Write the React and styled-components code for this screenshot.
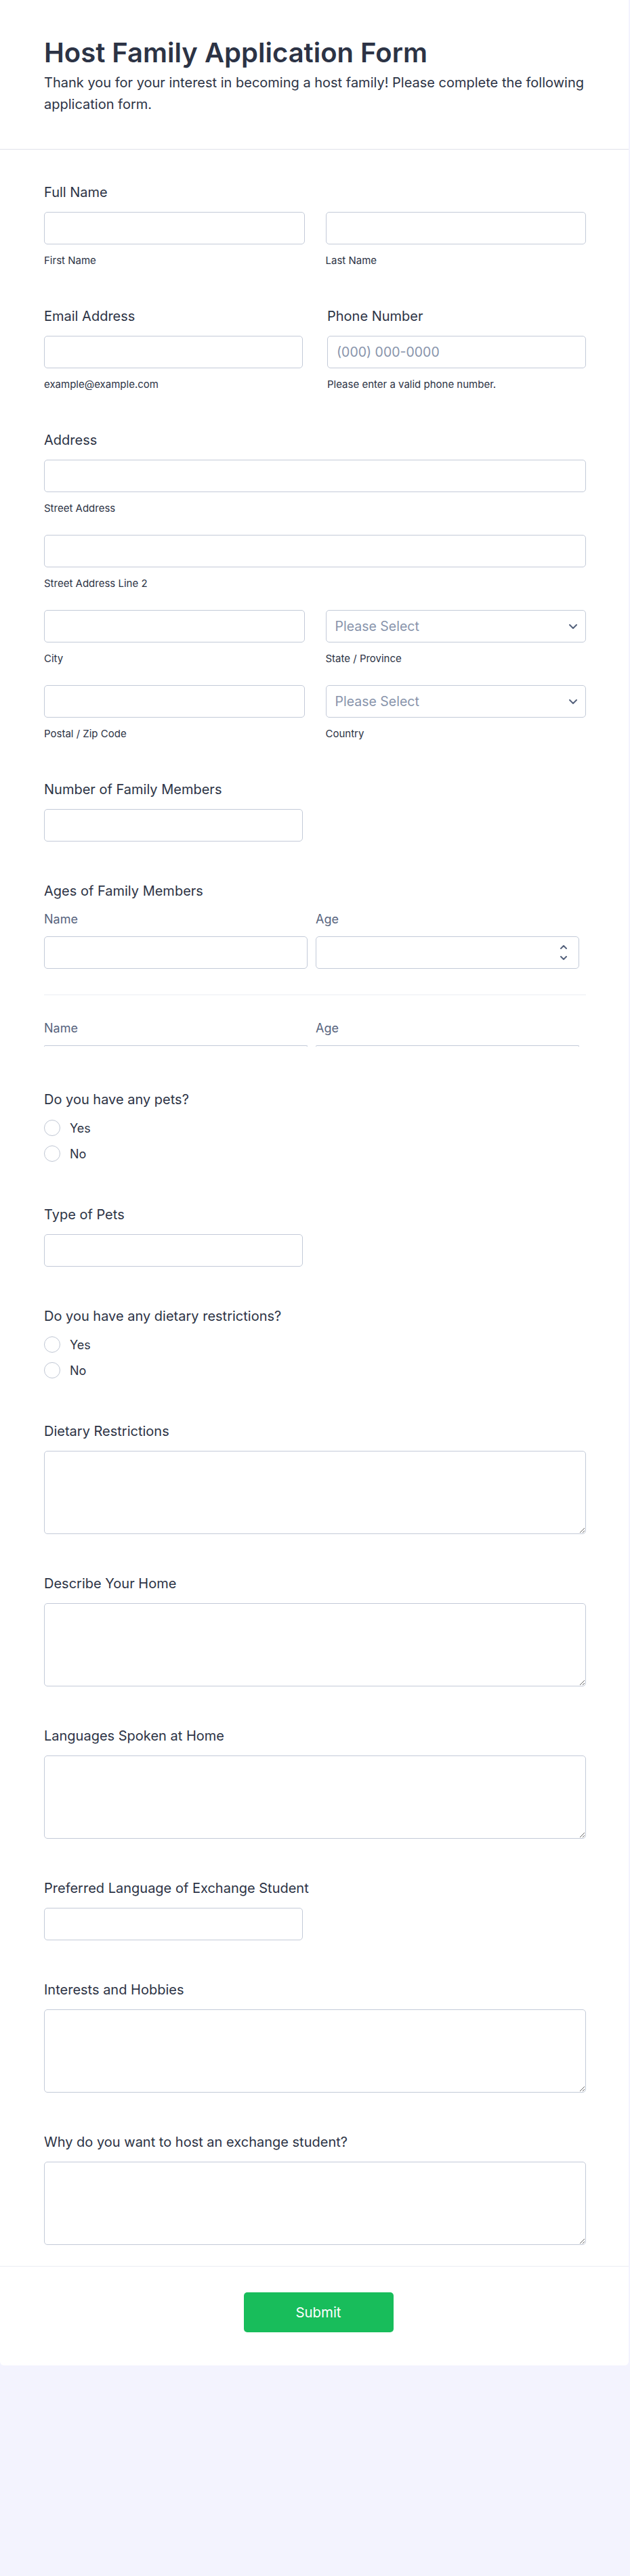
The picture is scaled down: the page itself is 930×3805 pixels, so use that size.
import React from 'react';
import styled, { createGlobalStyle } from 'styled-components';

const GlobalStyle = createGlobalStyle`
  html, body { margin: 0; padding: 0; background: #f3f3fe; }
  body {
    font-family: Inter, "Noto Sans", "Liberation Sans", sans-serif;
    color: #2c3345;
    -webkit-font-smoothing: antialiased;
  }
  *, *::before, *::after { box-sizing: border-box; }
`;

const Page = styled.div`
  min-height: 3805px;
  background: #f3f3fe;
`;

const Card = styled.main`
  width: 928px;
  background: #ffffff;
  border-radius: 0 0 6px 6px;
`;

const Header = styled.header`
  padding: 54px 63px 50px 65px;
  border-bottom: 1px solid #dfe1ea;
`;

const Title = styled.h1`
  margin: 0;
  font-size: 40px;
  line-height: 48px;
  font-weight: 600;
  color: #2c3345;
`;

const Description = styled.p`
  margin: 4px 0 0;
  font-size: 20px;
  line-height: 32px;
  color: #2c3345;
`;

const Body = styled.div`
  padding: 21px 63px 0 65px;
`;

const Field = styled.section`
  padding: 30px 0 31px;
`;

const Label = styled.label`
  display: block;
  font-size: 20px;
  line-height: 24px;
  font-weight: 400;
  color: #2c3345;
  margin-bottom: 17px;
`;

const Grid = styled.div`
  display: grid;
  grid-template-columns: 1fr 1fr;
  column-gap: ${(p) => p.$gap || 31}px;
  row-gap: 30px;
`;

const Cell = styled.div`
  display: flex;
  flex-direction: column;
  min-width: 0;
  grid-column: ${(p) => (p.$wide ? '1 / 3' : 'auto')};
`;

const boxStyles = `
  height: 48px;
  border: 1px solid #c3cad8;
  border-radius: 5px;
  background: #fff;
  font-family: Inter, "Noto Sans", sans-serif;
  font-size: 19.5px;
  color: #2c3345;
`;

const Input = styled.input`
  ${boxStyles}
  display: block;
  width: ${(p) => (p.$w ? `${p.$w}px` : '100%')};
  padding: 0 13px;
  outline: none;
  &::placeholder { color: #8894ab; }
`;

const SubLabel = styled.span`
  display: block;
  margin-top: 15px;
  font-size: 15px;
  line-height: 18px;
  color: #2c3345;
`;

const SelectBox = styled.div`
  ${boxStyles}
  display: flex;
  align-items: center;
  padding: 0 12px 0 13px;
`;

const Select = styled.select`
  flex: 1;
  min-width: 0;
  appearance: none;
  -webkit-appearance: none;
  border: none;
  outline: none;
  background: transparent;
  font-family: inherit;
  font-size: 19.5px;
  color: #8894ab;
  padding: 0;
`;

const NumberBox = styled.div`
  ${boxStyles}
  display: flex;
  align-items: center;
  padding: 0 17px 0 13px;
`;

const BareInput = styled.input`
  flex: 1;
  min-width: 0;
  border: none;
  outline: none;
  background: transparent;
  font-family: inherit;
  font-size: 19.5px;
  color: #2c3345;
  padding: 0;
  -moz-appearance: textfield;
  &::-webkit-inner-spin-button,
  &::-webkit-outer-spin-button { -webkit-appearance: none; margin: 0; }
`;

const Spinner = styled.div`
  display: flex;
  flex-direction: column;
  align-items: center;
  gap: 10px;
`;

const TableHead = styled.div`
  display: grid;
  grid-template-columns: 389px 389px;
  column-gap: 12px;
  font-size: 18px;
  line-height: 22px;
  color: #57647e;
  margin-bottom: 14px;
`;

const Table = styled.div`
  padding-top: 2px;
  padding-bottom: 5px;
`;

const TableRow = styled.div`
  display: grid;
  grid-template-columns: 389px 389px;
  column-gap: 12px;
`;

const RowSeparator = styled.hr`
  margin: 38px 0 38px;
  border: none;
  border-top: 1px solid #eceef3;
  height: 0;
`;

const ClippedInput = styled.div`
  height: 2px;
  border: 1px solid #c3cad8;
  border-bottom: none;
  border-radius: 5px 5px 0 0;
`;

const RadioList = styled.div`
  display: flex;
  flex-direction: column;
  gap: 10px;
  margin-top: -1px;
  padding-bottom: 3px;
`;

const RadioRow = styled.label`
  display: flex;
  align-items: center;
  gap: 14px;
  height: 28px;
  font-size: 18px;
  color: #2c3345;
`;

const RadioCircle = styled.span`
  width: 24px;
  height: 24px;
  border-radius: 50%;
  border: 1px solid #bfc6d3;
  background: #fff;
  flex: none;
`;

const TextArea = styled.textarea`
  display: block;
  width: 100%;
  height: 123px;
  border: 1px solid #c3cad8;
  border-radius: 5px;
  background: #fff;
  font-family: inherit;
  font-size: 19.5px;
  padding: 10px 13px;
  resize: vertical;
  outline: none;
`;

const Footer = styled.footer`
  border-top: 1px solid #ebedf3;
  padding: 38px 0 49px;
  display: flex;
  justify-content: center;
`;

const SubmitButton = styled.button`
  width: 221px;
  height: 59px;
  border: none;
  border-radius: 5px;
  background: #18bd5b;
  color: #ffffff;
  font-family: inherit;
  font-size: 20.4px;
  font-weight: 400;
  cursor: pointer;
  margin-left: 12px;
`;

const ChevronDown = ({ w = 12, h = 7, sw = 2 }) => (
  <svg width={w} height={h} viewBox={`0 0 ${w} ${h}`} fill="none">
    <path
      d={`M${sw / 2} ${sw / 2} L${w / 2} ${h - sw / 2} L${w - sw / 2} ${sw / 2}`}
      stroke="#57647e"
      strokeWidth={sw}
      strokeLinecap="round"
      strokeLinejoin="round"
    />
  </svg>
);

const ChevronUp = ({ w = 10, h = 6, sw = 2 }) => (
  <svg width={w} height={h} viewBox={`0 0 ${w} ${h}`} fill="none">
    <path
      d={`M${sw / 2} ${h - sw / 2} L${w / 2} ${sw / 2} L${w - sw / 2} ${h - sw / 2}`}
      stroke="#57647e"
      strokeWidth={sw}
      strokeLinecap="round"
      strokeLinejoin="round"
    />
  </svg>
);

const TextField = ({ label, width }) => (
  <Field>
    <Label>{label}</Label>
    <Input type="text" $w={width} />
  </Field>
);

const AreaField = ({ label }) => (
  <Field>
    <Label>{label}</Label>
    <TextArea />
  </Field>
);

const RadioField = ({ label }) => (
  <Field>
    <Label>{label}</Label>
    <RadioList>
      {['Yes', 'No'].map((o) => (
        <RadioRow key={o}>
          <RadioCircle />
          {o}
        </RadioRow>
      ))}
    </RadioList>
  </Field>
);

const SelectField = () => (
  <SelectBox>
    <Select defaultValue="">
      <option value="">Please Select</option>
    </Select>
    <ChevronDown />
  </SelectBox>
);

const SubField = ({ sub, wide, children }) => (
  <Cell $wide={wide}>
    {children}
    <SubLabel>{sub}</SubLabel>
  </Cell>
);

export default function App() {
  return (
    <Page>
      <GlobalStyle />
      <Card>
        <Header>
          <Title>Host Family Application Form</Title>
          <Description>
            Thank you for your interest in becoming a host family! Please complete the following
            application form.
          </Description>
        </Header>
        <Body>
          <Field>
            <Label>Full Name</Label>
            <Grid>
              <SubField sub="First Name">
                <Input type="text" />
              </SubField>
              <SubField sub="Last Name">
                <Input type="text" />
              </SubField>
            </Grid>
          </Field>

          <Grid $gap={36}>
            <Field>
              <Label>Email Address</Label>
              <Input type="email" />
              <SubLabel>example@example.com</SubLabel>
            </Field>
            <Field>
              <Label>Phone Number</Label>
              <Input type="tel" placeholder="(000) 000-0000" />
              <SubLabel>Please enter a valid phone number.</SubLabel>
            </Field>
          </Grid>

          <Field>
            <Label>Address</Label>
            <Grid>
              <SubField sub="Street Address" wide>
                <Input type="text" />
              </SubField>
              <SubField sub="Street Address Line 2" wide>
                <Input type="text" />
              </SubField>
              <SubField sub="City">
                <Input type="text" />
              </SubField>
              <SubField sub="State / Province">
                <SelectField />
              </SubField>
              <SubField sub="Postal / Zip Code">
                <Input type="text" />
              </SubField>
              <SubField sub="Country">
                <SelectField />
              </SubField>
            </Grid>
          </Field>

          <TextField label="Number of Family Members" width={382} />

          <Field>
            <Label>Ages of Family Members</Label>
            <Table>
              <TableHead>
                <span>Name</span>
                <span>Age</span>
              </TableHead>
              <TableRow>
                <Input type="text" />
                <NumberBox>
                  <BareInput type="number" />
                  <Spinner>
                    <ChevronUp />
                    <ChevronDown w={10} h={6} />
                  </Spinner>
                </NumberBox>
              </TableRow>
              <RowSeparator />
              <TableHead>
                <span>Name</span>
                <span>Age</span>
              </TableHead>
              <TableRow>
                <ClippedInput />
                <ClippedInput />
              </TableRow>
            </Table>
          </Field>

          <RadioField label="Do you have any pets?" />
          <TextField label="Type of Pets" width={382} />
          <RadioField label="Do you have any dietary restrictions?" />
          <AreaField label="Dietary Restrictions" />
          <AreaField label="Describe Your Home" />
          <AreaField label="Languages Spoken at Home" />
          <TextField label="Preferred Language of Exchange Student" width={382} />
          <AreaField label="Interests and Hobbies" />
          <AreaField label="Why do you want to host an exchange student?" />
        </Body>
        <Footer>
          <SubmitButton type="button">Submit</SubmitButton>
        </Footer>
      </Card>
    </Page>
  );
}
